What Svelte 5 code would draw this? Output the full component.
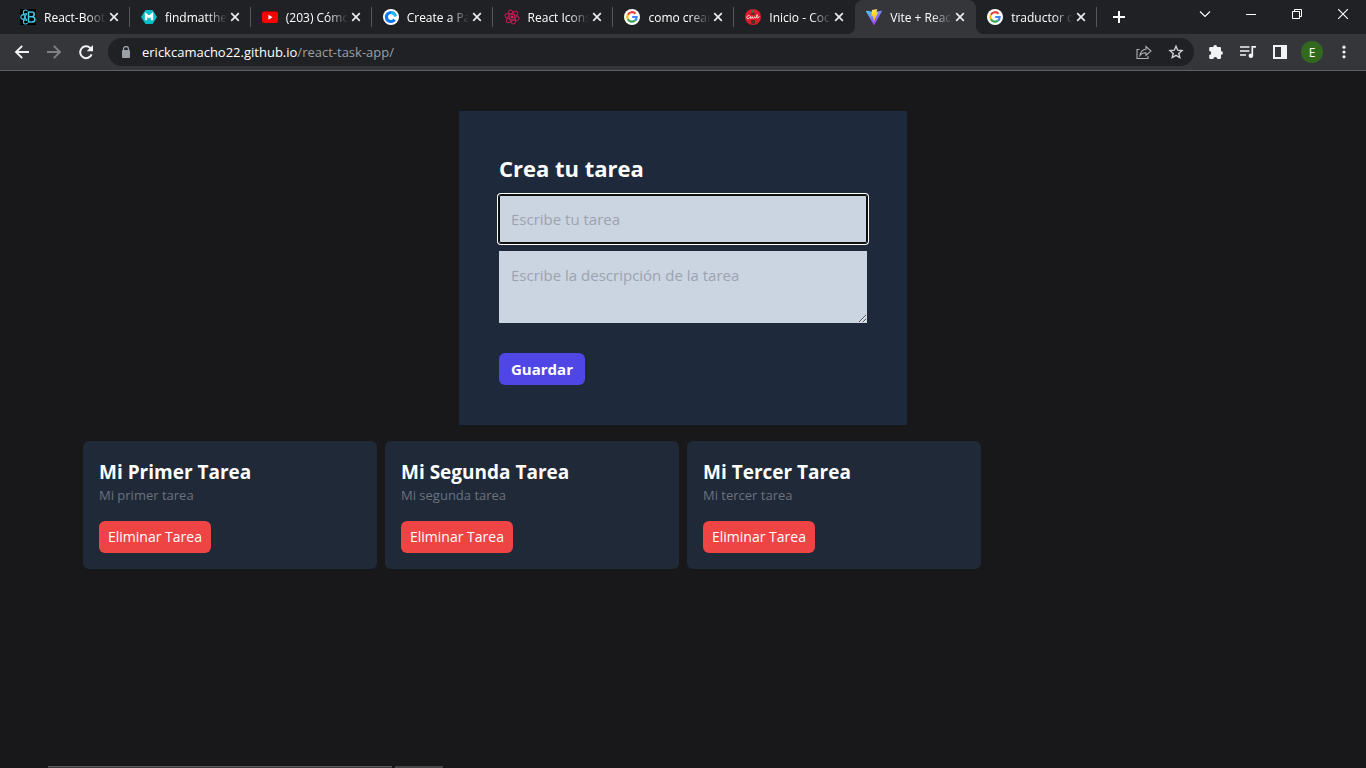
<script>
  const tabs = [
    { icon: 'bootstrap', title: 'React-Boot' },
    { icon: 'hex', title: 'findmatthe' },
    { icon: 'youtube', title: '(203) Cómo' },
    { icon: 'create', title: 'Create a Pa' },
    { icon: 'react', title: 'React Icons' },
    { icon: 'google', title: 'como crear' },
    { icon: 'coke', title: 'Inicio - Coc' },
    { icon: 'vite', title: 'Vite + Reac', active: true },
    { icon: 'google', title: 'traductor d' },
  ];

  let tasks = $state([
    { id: 1, title: 'Mi Primer Tarea', description: 'Mi primer tarea' },
    { id: 2, title: 'Mi Segunda Tarea', description: 'Mi segunda tarea' },
    { id: 3, title: 'Mi Tercer Tarea', description: 'Mi tercer tarea' },
  ]);
  let title = $state('');
  let description = $state('');

  function save(event) {
    event.preventDefault();
    if (!title) return;
    tasks.push({ id: Date.now(), title, description });
    title = '';
    description = '';
  }

  function remove(id) {
    tasks = tasks.filter((t) => t.id !== id);
  }
</script>

{#snippet favicon(name)}
  <svg class="favicon" viewBox="0 0 16 16" aria-hidden="true">
    {#if name === 'bootstrap'}
      <rect width="16" height="16" fill="#000" />
      <g fill="none" stroke="#41c8e4" stroke-width="1.2">
        <path d="M7 4.900C4 4.700.8 6 .8 8s3.200 3.300 6.200 3.100" />
        <path d="M7.500 1.900C6.500.8 4.500.6 3.700 1.800 2.600 4 5 9 7 11.500" />
        <path d="M7.500 14.100c-1 1.100-3 1.300-3.800.1C2.600 12 5 7 7 4.500" />
        <path d="M8.500 3h3.200c3.400 0 3.200 4.300.3 4.700 3.900.2 3.900 5.300 0 5.300H8.500zM8.500 7.700H12" stroke-width="1.600" />
      </g>
    {:else if name === 'hex'}
      <path d="M4.500 1h7L16 8l-4.500 7h-7L0 8z" fill="#06bcc9" />
      <path d="M5 11.300V5.500L8 8l3-2.500v5.800" fill="none" stroke="#fff" stroke-width="2.400" />
    {:else if name === 'youtube'}
      <rect y="2.500" width="16" height="11.500" rx="2.500" fill="#f00" />
      <path d="M6.400 5.800v4.900L10.600 8.200z" fill="#fff" />
    {:else if name === 'create'}
      <circle cx="8" cy="8" r="8" fill="#fff" />
      <path d="M11.600 10.600A4.500 4.500 0 1 1 11.600 5.400" fill="none" stroke="#0a78f0" stroke-width="3.200" />
      <path d="M8 3.500A4.500 4.500 0 0 1 11.600 5.400L13 7.300" fill="none" stroke="#22b8f7" stroke-width="3" />
    {:else if name === 'react'}
      <g fill="none" stroke="#c91d57" stroke-width="1">
        <ellipse cx="8" cy="8" rx="7.300" ry="2.800" transform="rotate(15 8 8)" />
        <ellipse cx="8" cy="8" rx="7.300" ry="2.800" transform="rotate(75 8 8)" />
        <ellipse cx="8" cy="8" rx="7.300" ry="2.800" transform="rotate(135 8 8)" />
      </g>
      <circle cx="8" cy="8" r="1.400" fill="#e91e63" />
    {:else if name === 'google'}
      <circle cx="8" cy="8" r="8" fill="#fff" />
      <g fill="none" stroke-width="2.200">
        <path d="M11.500 4.700A4.700 4.700 0 0 0 3.900 5.700" stroke="#ea4335" />
        <path d="M3.900 5.700a4.700 4.700 0 0 0 0 4.600" stroke="#fbbc05" />
        <path d="M3.900 10.300a4.700 4.700 0 0 0 7 1.400" stroke="#34a853" />
        <path d="M10.900 11.700A4.700 4.700 0 0 0 12.700 8H8.200" stroke="#4285f4" />
      </g>
    {:else if name === 'coke'}
      <circle cx="8" cy="8" r="8" fill="#e01b2b" />
      <path d="M7 .5h2v3l1.300 2.300H5.700L7 3.500zM6 11h4v3l-1 1H7l-1-1z" fill="#5b2a22" />
      <path d="M7.200 1h1.600v2.500H7.200z" fill="#3d8a5a" />
      <path d="M4.500 6.500C1.500 6.300.8 10 3.300 9.700c1.300-.2 1.700-1.500 2.200-2.200-.8 2.700 1.200 2.400 1.700.2.200 2.300 1.500 2 2.300.1.200 1.900 1.300 1.500 2.300-.3.600-1.300.6-2 .3-1.800-.6.500-.6 3.200.3 3.400.8.200 1.300-.9 1.900-1.800" fill="none" stroke="#fff" stroke-width=".9" />
    {:else if name === 'vite'}
      <defs>
        <linearGradient id="vite-a" x1="0" y1="0" x2=".6" y2="1"><stop offset="0" stop-color="#41d1ff" /><stop offset="1" stop-color="#a832fe" /></linearGradient>
        <linearGradient id="vite-b" x1=".4" y1="0" x2=".6" y2="1"><stop offset="0" stop-color="#ffea83" /><stop offset=".3" stop-color="#ffdd35" /><stop offset="1" stop-color="#ffa800" /></linearGradient>
      </defs>
      <path d="M15.900 2.400 8.400 15.700a.5.500 0 0 1-.8 0L.1 2.400a.4.400 0 0 1 .5-.6L8 3.100l7.400-1.300a.4.400 0 0 1 .5.600z" fill="url(#vite-a)" />
      <path d="M11.600 0 6.100 1.100a.2.200 0 0 0-.2.200l-.4 5.800c0 .1.100.2.300.2l1.500-.4-.5 2.300c0 .2.100.3.300.2l1-.3-.8 3.500c0 .2.200.3.300.1l4.500-9.100c.1-.1 0-.3-.2-.3l-1.600.3.900-3.400a.2.200 0 0 0-.3-.2z" fill="url(#vite-b)" />
    {/if}
  </svg>
{/snippet}

<div class="window">
  <header>
    <div class="tab-strip">
      <div class="tabs">
        {#each tabs as tab}
          <div class="tab" class:active={tab.active}>
            {@render favicon(tab.icon)}
            <span class="tab-title">{tab.title}</span>
            <button class="tab-close" aria-label="Cerrar pestaña">
              <svg width="10" height="10" viewBox="0 0 10 10"><path d="M1.200 1.200l7.600 7.600M8.800 1.200L1.200 8.800" stroke="#e8eaed" stroke-width="1.700" /></svg>
            </button>
          </div>
        {/each}
      </div>
      <button class="new-tab" aria-label="Nueva pestaña">
        <svg width="12" height="12" viewBox="0 0 12 12"><path d="M6 0v12M0 6h12" stroke="#fff" stroke-width="2" /></svg>
      </button>
      <div class="controls">
        <button aria-label="Buscar pestañas"><svg width="12" height="12" viewBox="0 0 12 12"><path d="M1 3.500l5 5 5-5" fill="none" stroke="#fff" stroke-width="1.100" /></svg></button>
        <button aria-label="Minimizar"><svg width="10" height="10" viewBox="0 0 10 10"><path d="M0 5.500h10" stroke="#fff" /></svg></button>
        <button aria-label="Restaurar"><svg width="10" height="10" viewBox="0 0 10 10"><path d="M.5 2.500h7v7h-7zM2.500 2.500v-2h7v7h-2" fill="none" stroke="#fff" /></svg></button>
        <button aria-label="Cerrar"><svg width="10" height="10" viewBox="0 0 10 10"><path d="M0 0l10 10M10 0L0 10" stroke="#fff" stroke-width="1.100" /></svg></button>
      </div>
    </div>

    <div class="toolbar">
      <button aria-label="Atrás"><svg width="16" height="16" viewBox="0 0 16 16"><path d="M15 8H2M8.200 1.800L2 8l6.200 6.200" fill="none" stroke="#f1f3f4" stroke-width="1.900" /></svg></button>
      <button aria-label="Adelante"><svg width="16" height="16" viewBox="0 0 16 16"><path d="M1 8h13M7.800 1.800L14 8l-6.200 6.200" fill="none" stroke="#808184" stroke-width="1.900" /></svg></button>
      <button aria-label="Recargar"><svg width="16" height="16" viewBox="0 0 16 16"><path d="M13.600 10.300A5.900 5.900 0 1 1 12.200 4L14 5.700" fill="none" stroke="#f1f3f4" stroke-width="2" /><path d="M15 1v6.300H8.700z" fill="#f1f3f4" /></svg></button>
      <div class="omnibox">
        <svg width="10" height="12" viewBox="0 0 10 12" aria-hidden="true"><path d="M2.500 5V3a2.500 2.500 0 0 1 5 0v2" fill="none" stroke="#9aa0a6" stroke-width="1.300" /><rect x="1" y="4" width="8" height="8" rx="1" fill="#9aa0a6" /></svg>
        <span class="url">erickcamacho22.github.io<span>/react-task-app/</span></span>
        <button aria-label="Compartir"><svg width="16" height="16" viewBox="0 0 16 16"><path d="M3.500 5.500H1v9h11V12M4 11.500C4.500 7.500 6.500 5.500 10 5.200V2.500L15 7l-5 4.400V8.800C7.300 8.700 5.500 9.500 4 11.500z" fill="none" stroke="#aeb1b5" stroke-width="1.100" /></svg></button>
        <button aria-label="Añadir a marcadores"><svg width="16" height="16" viewBox="0 0 16 16"><path d="M8 2.200l1.700 4 4.300.4-3.200 2.800 1 4.200L8 11.400l-3.800 2.200 1-4.200L2 6.600l4.300-.4z" fill="none" stroke="#d0d2d5" stroke-width="1.400" /></svg></button>
      </div>
      <button aria-label="Extensiones"><svg width="16" height="16" viewBox="0 0 16 16"><path d="M5.300 2.900a1.900 1.900 0 0 1 3.800 0h2.700a1.200 1.200 0 0 1 1.200 1.200v2.900a1.900 1.900 0 0 1 0 3.800v2.900a1.200 1.200 0 0 1-1.200 1.200H9.300a2 2 0 0 0-4 0H2.400a1.200 1.200 0 0 1-1.200-1.200v-2.700a2 2 0 0 0 0-4V4.100a1.200 1.200 0 0 1 1.200-1.200z" fill="#f1f3f4" /></svg></button>
      <button aria-label="Controles multimedia"><svg width="16" height="16" viewBox="0 0 16 16"><path d="M0 3h9.500M0 7h9.500M0 11h6" stroke="#f1f3f4" stroke-width="1.700" /><path d="M12.300 12V2.900H16" fill="none" stroke="#f1f3f4" stroke-width="1.700" /><circle cx="10.900" cy="11.800" r="2.300" fill="#f1f3f4" /></svg></button>
      <button aria-label="Panel lateral"><svg width="16" height="16" viewBox="0 0 16 16"><path d="M1 1h14v14H1zM3 3v10h6V3z" fill="#f1f3f4" fill-rule="evenodd" /></svg></button>
      <button aria-label="Perfil"><span class="avatar">E</span></button>
      <button aria-label="Menú"><svg width="16" height="16" viewBox="0 0 16 16" fill="#f1f3f4"><circle cx="8" cy="3.200" r="1.600" /><circle cx="8" cy="8" r="1.600" /><circle cx="8" cy="12.800" r="1.600" /></svg></button>
    </div>
  </header>

  <main>
    <form onsubmit={save}>
      <h1>Crea tu tarea</h1>
      <input class="focused" type="text" aria-label="Tarea" placeholder="Escribe tu tarea" bind:value={title} />
      <textarea rows="2" aria-label="Descripción" placeholder="Escribe la descripción de la tarea" bind:value={description}></textarea>
      <button class="save">Guardar</button>
    </form>

    <div class="cards">
      {#each tasks as task (task.id)}
        <article>
          <h2>{task.title}</h2>
          <p>{task.description}</p>
          <button class="delete" onclick={() => remove(task.id)}>Eliminar Tarea</button>
        </article>
      {/each}
    </div>
  </main>

  <div class="edge" aria-hidden="true"><i class="edge-search"></i><i class="edge-button"></i></div>
</div>

<style>
  :global(body) {
    background: #18181b;
  }
  .window {
    min-height: 100vh;
    display: flex;
    flex-direction: column;
    font-family: 'Open Sans', 'Noto Sans', sans-serif;
    color: #fff;
  }
  .window * {
    box-sizing: border-box;
  }
  button {
    border: 0;
    padding: 0;
    background: none;
    color: inherit;
    font: inherit;
  }
  svg {
    display: block;
    flex: none;
  }
  h1,
  h2,
  p {
    margin: 0;
  }

  .tab-strip {
    display: flex;
    height: 34px;
    padding-left: 9px;
    background: #202124;
  }
  .tabs {
    display: flex;
    flex: 0 1 1088px;
    min-width: 0;
  }
  .tab {
    position: relative;
    display: flex;
    align-items: center;
    flex: 1 1 0;
    min-width: 0;
    padding: 0 10px 0 11px;
    font-size: 12px;
  }
  .tab:not(.active)::after {
    content: '';
    position: absolute;
    right: 0;
    top: 7px;
    width: 1px;
    height: 20px;
    background: #55575b;
  }
  .tab:has(+ .active)::after {
    display: none;
  }
  .tab.active {
    background: #35363a;
    border-radius: 8px 8px 0 0;
  }
  .tab.active::before,
  .tab.active::after {
    content: '';
    position: absolute;
    bottom: 0;
    width: 8px;
    height: 8px;
  }
  .tab.active::before {
    left: -8px;
    background: radial-gradient(circle at 0 0, transparent 8px, #35363a 8px);
  }
  .tab.active::after {
    right: -8px;
    background: radial-gradient(circle at 100% 0, transparent 8px, #35363a 8px);
  }
  .favicon {
    width: 16px;
    height: 16px;
  }
  .tab-title {
    flex: 1;
    min-width: 0;
    margin-left: 8px;
    overflow: hidden;
    white-space: nowrap;
    mask-image: linear-gradient(to right, #000 calc(100% - 20px), transparent);
  }
  .tab-close {
    display: grid;
    place-items: center;
    width: 12px;
    height: 16px;
    margin-left: 2px;
  }
  .new-tab {
    display: grid;
    place-items: center;
    width: 28px;
    margin-left: 8px;
  }
  .controls {
    display: flex;
    height: 28px;
    margin-left: auto;
  }
  .controls button {
    display: grid;
    place-items: center;
    width: 46px;
  }

  .toolbar {
    display: flex;
    align-items: center;
    height: 37px;
    padding: 0 6px;
    background: #35363a;
    border-bottom: 1px solid #5f6063;
  }
  .toolbar button {
    display: grid;
    place-items: center;
    flex: none;
    width: 32px;
    height: 28px;
  }
  .omnibox {
    display: flex;
    align-items: center;
    flex: 1;
    min-width: 0;
    height: 28px;
    margin: 0 6px;
    padding: 0 2px 0 13px;
    border-radius: 14px;
    background: #202124;
  }
  .url {
    flex: 1;
    min-width: 0;
    margin-left: 11px;
    overflow: hidden;
    white-space: nowrap;
    font-size: 13px;
  }
  .url span {
    color: #9aa0a6;
  }
  .avatar {
    display: grid;
    place-items: center;
    width: 22px;
    height: 22px;
    border-radius: 50%;
    background: #33691e;
    font-size: 12px;
  }

  main {
    width: 100%;
    max-width: 1280px;
    margin: 0 auto;
    padding: 40px;
  }
  form {
    display: flex;
    flex-direction: column;
    align-items: flex-start;
    max-width: 448px;
    margin: 0 auto 16px;
    padding: 40px;
    background: #1e293b;
  }
  h1 {
    margin-bottom: 10px;
    font-size: 22px;
    line-height: 34px;
  }
  input,
  textarea {
    width: 100%;
    margin: 0 0 8px;
    padding: 12px;
    border: 0;
    border-radius: 0;
    background: #cbd5e1;
    color: #111;
    font: inherit;
    font-size: 15px;
    line-height: 24px;
    outline: 0;
  }
  textarea {
    height: 72px;
    margin-bottom: 30px;
  }
  ::placeholder {
    color: #9ca3af;
    opacity: 1;
  }
  .focused {
    border-radius: 2px;
    box-shadow: inset 0 0 0 1px #101010, 0 0 0 1px #101010, 0 0 0 2px #fff;
  }
  .save,
  .delete {
    height: 32px;
    border-radius: 6px;
    line-height: 24px;
  }
  .save {
    padding: 4px 12px;
    background: #4f46e5;
    font-size: 15px;
    font-weight: 700;
  }
  .delete {
    margin-top: 16px;
    padding: 4px 9px;
    background: #ef4444;
    font-size: 14px;
  }
  .cards {
    display: grid;
    grid-template-columns: repeat(4, 1fr);
    gap: 8px;
  }
  article {
    padding: 16px;
    border-radius: 6px;
    background: #1f2937;
  }
  h2 {
    padding-top: 2px;
    font-size: 19px;
    line-height: 26px;
  }
  p {
    color: #6b7280;
    font-size: 13px;
    line-height: 20px;
  }

  .edge {
    display: flex;
    gap: 3px;
    height: 2px;
    margin-top: auto;
    padding-left: 48px;
  }
  .edge-search {
    width: 344px;
    background: #3a3a3a;
    border-top: 1px solid #5c5c5c;
  }
  .edge-button {
    width: 48px;
    background: #444;
  }
</style>
